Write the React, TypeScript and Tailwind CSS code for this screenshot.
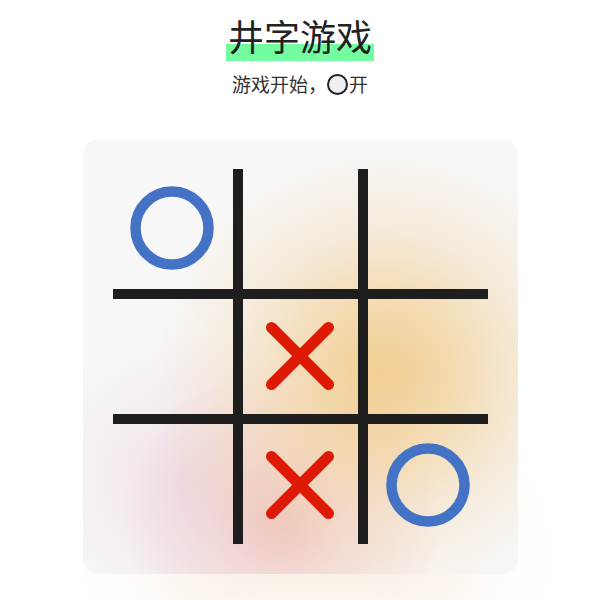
import React from 'react';

type Mark = 'O' | 'X' | null;

const board: Mark[] = ['O', null, null, null, 'X', null, null, 'X', 'O'];

const CircleMark = () => (
  <svg width="84" height="84" viewBox="0 0 84 84">
    <circle cx="42" cy="42" r="36.5" fill="none" stroke="#4472c4" strokeWidth="10.5" />
  </svg>
);

const CrossMark = () => (
  <svg width="70" height="70" viewBox="0 0 70 70">
    <g stroke="#de1a06" strokeWidth="11" strokeLinecap="round">
      <line x1="6.5" y1="6.5" x2="63.5" y2="63.5" />
      <line x1="63.5" y1="6.5" x2="6.5" y2="63.5" />
    </g>
  </svg>
);

const GridLines = () => (
  <svg className="absolute inset-0" width="375" height="375" viewBox="0 0 375 375">
    <g fill="#1e1e1e">
      <rect x="120" y="0" width="10" height="375" />
      <rect x="245" y="0" width="10" height="375" />
      <rect x="0" y="120" width="375" height="10" />
      <rect x="0" y="245" width="375" height="10" />
    </g>
  </svg>
);

export default function App() {
  return (
    <div className="min-h-[600px] bg-white flex flex-col items-center font-['Noto_Sans_CJK_SC','Noto_Sans',sans-serif] text-[#222]">
      {/* Title */}
      <h1 className="mt-[9px] text-[36px] leading-[52px] font-normal">
        <span className="px-[2px] bg-[linear-gradient(transparent_68%,#74fca0_68%)]">井字游戏</span>
      </h1>

      {/* Status line */}
      <div className="mt-[10px] flex items-center text-[19px] leading-[26px] text-[#333]">
        <span>游戏开始，</span>
        <span className="inline-block w-[21px] h-[21px] rounded-full border-2 border-[#222] bg-[#f1eef2] mr-[1px]" />
        <span>开</span>
      </div>

      {/* Board */}
      <div className="relative mt-[42px]">
        <div className="absolute left-[70px] right-[40px] bottom-[-34px] h-[110px] rounded-full bg-[#f4e2cc] blur-2xl opacity-60" />
        <div className="relative w-[435px] h-[435px] rounded-[16px] p-[30px] bg-[#f7f7f7] bg-[radial-gradient(circle_at_69%_54%,rgba(242,204,140,0.95)_0px,rgba(242,206,146,0.7)_70px,rgba(242,210,160,0.3)_150px,rgba(242,210,160,0)_230px),radial-gradient(circle_at_46%_88%,rgba(238,188,182,0.8)_0px,rgba(238,188,182,0.4)_70px,rgba(238,188,182,0)_160px),radial-gradient(circle_at_24%_78%,rgba(236,214,228,0.7)_0px,rgba(236,214,228,0.35)_70px,rgba(236,214,228,0)_150px)] overflow-hidden">
          <div className="relative w-[375px] h-[375px]">
            <GridLines />
            <div className="relative grid grid-cols-3 grid-rows-3 gap-[10px] w-full h-full">
              {board.map((m, i) => (
                <div key={i} className="flex items-center justify-center">
                  {m === 'O' && <CircleMark />}
                  {m === 'X' && <CrossMark />}
                </div>
              ))}
            </div>
          </div>
        </div>
      </div>
    </div>
  );
}
